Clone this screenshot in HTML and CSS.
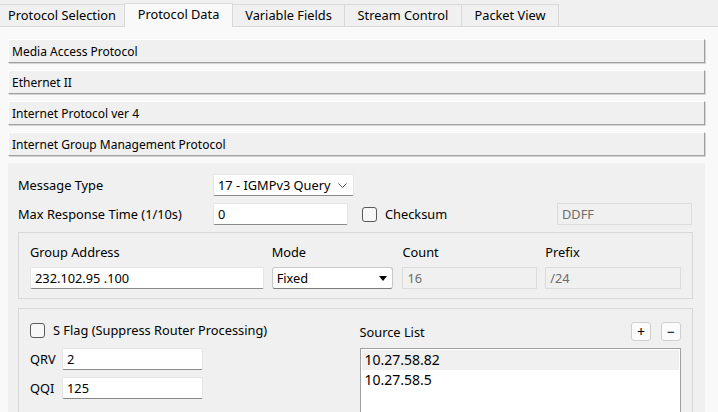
FILE: index.html
```html
<!DOCTYPE html>
<html>
<head>
<meta charset="utf-8">
<link rel="stylesheet" href="styles.css">
</head>
<body>
<div class="tabs">
  <div class="tab t1">Protocol Selection</div>
  <div class="tab t2 active">Protocol Data</div>
  <div class="tab t3">Variable Fields</div>
  <div class="tab t4">Stream Control</div>
  <div class="tab t5">Packet View</div>
</div>
<div class="pane">
  <div class="headers">
    <div class="hdr">Media Access Protocol</div>
    <div class="hdr">Ethernet II</div>
    <div class="hdr">Internet Protocol ver 4</div>
    <div class="hdr">Internet Group Management Protocol</div>
  </div>
  <div class="content">
    <div class="row r1">
      <div class="lbl">Message Type</div>
      <div class="field select w141">
        <span>17 - IGMPv3 Query</span>
        <svg class="chev" width="9" height="5" viewBox="0 0 9 5"><polyline points="0.5,0.5 4.5,4.5 8.5,0.5" fill="none" stroke="#555" stroke-width="1"/></svg>
      </div>
    </div>
    <div class="row r2">
      <div class="lbl">Max Response Time (1/10s)</div>
      <div class="field w135">0</div>
      <div class="check cs"><span class="box"></span><span>Checksum</span></div>
      <div class="field disabled w135 ddff">DDFF</div>
    </div>
    <div class="group g1">
      <div class="col ga">
        <div class="clbl">Group Address</div>
        <div class="field">232.102.95 .100</div>
      </div>
      <div class="col mode">
        <div class="clbl">Mode</div>
        <div class="field combo">
          <span>Fixed</span>
          <svg width="8" height="5" viewBox="0 0 8 5"><polygon points="0,0 8,0 4,5" fill="#000"/></svg>
        </div>
      </div>
      <div class="col count">
        <div class="clbl">Count</div>
        <div class="field disabled">16</div>
      </div>
      <div class="col prefix">
        <div class="clbl">Prefix</div>
        <div class="field disabled">/24</div>
      </div>
    </div>
    <div class="group g2">
      <div class="left">
        <div class="check sflag"><span class="box"></span><span>S Flag (Suppress Router Processing)</span></div>
        <div class="kv"><span class="k">QRV</span><div class="field w141">2</div></div>
        <div class="kv"><span class="k">QQI</span><div class="field w141">125</div></div>
      </div>
      <div class="right">
        <div class="srchead">
          <span>Source List</span>
          <div class="btns">
            <div class="btn">+</div>
            <div class="btn">&minus;</div>
          </div>
        </div>
        <div class="list">
          <div class="item sel">10.27.58.82</div>
          <div class="item">10.27.58.5</div>
        </div>
      </div>
    </div>
  </div>
</div>
</body>
</html>
```
FILE: styles.css
```css
* { box-sizing: border-box; }
html, body { margin: 0; padding: 0; }
body {
  width: 718px;
  height: 412px;
  overflow: hidden;
  background: #f0f0f0;
  font-family: "Noto Sans", "Segoe UI", sans-serif;
  font-size: 12.8px;
  color: #000;
}
.tabs {
  display: flex;
  align-items: flex-end;
  height: 26px;
}
.tab {
  height: 22px;
  display: flex;
  align-items: center;
  justify-content: center;
  background: #f0f0f0;
  border: 1px solid #d9d9d9;
  border-bottom: none;
  margin-right: -1px;
  line-height: 1;
}
.t1 { width: 125px; border-left: none; }
.t2 { width: 109px; }
.t3 { width: 113px; }
.t4 { width: 118px; }
.t5 { width: 98px; }
.tab.active {
  height: 24px;
  margin-bottom: -1px;
  background: #f9f9f9;
  position: relative;
  z-index: 1;
  padding-bottom: 2px;
}
.pane {
  background: #f9f9f9;
  border-top: 1px solid #d9d9d9;
  height: 386px;
  padding: 12px 13px 0 8px;
}
.headers {
  display: flex;
  flex-direction: column;
  gap: 7px;
}
.hdr {
  height: 24px;
  display: flex;
  align-items: center;
  padding-left: 3px;
  font-size: 12px;
  background: #f0f0f0;
  border-top: 1px solid #ffffff;
  border-left: 1px solid #ffffff;
  border-right: 1px solid #a0a0a0;
  border-bottom: 1px solid #a0a0a0;
  box-shadow: 1px 1px 0 #d4d4d4;
}
.content {
  margin-top: 7px;
  background: #f0f0f0;
  height: 260px;
  padding: 11px 12px 0 10px;
}
.row {
  display: flex;
  align-items: center;
  height: 22px;
}
.r2 { margin-top: 7px; }
.lbl { width: 195px; }
.field {
  height: 22px;
  background: #fff;
  border: 1px solid #e5e5e5;
  border-bottom: 1px solid #8a8a8a;
  border-radius: 2px;
  display: flex;
  align-items: center;
  padding: 0 4px;
  white-space: nowrap;
}
.w141 { width: 141px; }
.w135 { width: 135px; }
.select {
  justify-content: space-between;
  padding-right: 6px;
}
.chev { margin-top: 1px; }
.field.disabled {
  background: #f0f0f0;
  border: 1px solid #dcdcdc;
  color: #6d6d6d;
  border-radius: 0;
}
.check {
  display: flex;
  align-items: center;
  gap: 8px;
}
.box {
  width: 15px;
  height: 15px;
  border: 1px solid #5a5a5a;
  border-radius: 3px;
  background: #f7f7f7;
}
.cs { margin-left: 14px; }
.ddff { margin-left: auto; margin-right: 1px; }
.group {
  border: 1px solid #d8d8d8;
  width: 675px;
}
.g1 {
  margin-top: 7px;
  height: 67px;
  display: flex;
  padding: 11px 11px 0 11px;
}
.col { display: flex; flex-direction: column; }
.clbl { height: 16px; line-height: 16px; margin-bottom: 7px; }
.ga { width: 234px; }
.mode { width: 122px; margin-left: 8px; }
.count { width: 135px; margin-left: 9px; }
.prefix { width: 136px; margin-left: 8px; }
.combo {
  justify-content: space-between;
  border: 1px solid #c8c8c8;
  border-bottom: 1px solid #7a7a7a;
  border-radius: 3px;
  padding-right: 5px;
}
.g2 {
  margin-top: 9px;
  height: 120px;
  display: flex;
  padding: 13px 11px 0 11px;
}
.left { width: 330px; }
.sflag { height: 16px; }
.kv {
  display: flex;
  align-items: center;
  margin-top: 10px;
}
.kv + .kv { margin-top: 7px; }
.k { width: 32px; }
.right { width: 322px; }
.srchead {
  display: flex;
  justify-content: space-between;
  align-items: center;
  height: 19px;
}
.btns { display: flex; gap: 10px; }
.btn {
  width: 20px;
  height: 19px;
  border: 1px solid #cfcfcf;
  border-radius: 3px;
  background: #fbfbfb;
  display: flex;
  align-items: center;
  justify-content: center;
  font-size: 14px;
  line-height: 1;
}
.list {
  margin-top: 7px;
  height: 80px;
  background: #fff;
  border: 1px solid #a0a0a0;
  padding: 1px;
}
.item {
  height: 20px;
  line-height: 20px;
  padding-left: 3px;
  font-size: 14px;
}
.item.sel { background: #f0f0f0; }
```
